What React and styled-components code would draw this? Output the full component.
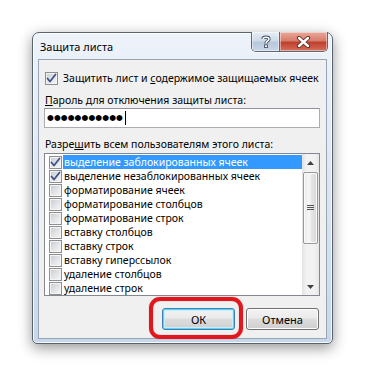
import React from 'react';
import styled, { createGlobalStyle } from 'styled-components';

const GlobalStyle = createGlobalStyle`
  body {
    margin: 0;
    background: #ffffff;
    font-family: "Noto Sans", "Segoe UI", sans-serif;
    font-size: 10.5px;
    color: #000;
  }
`;

const Page = styled.div`
  width: 366px;
  height: 378px;
  padding: 32px 0 0 32px;
  box-sizing: border-box;
`;

const Window = styled.div`
  width: 301px;
  height: 312px;
  box-sizing: border-box;
  border: 1px solid #59626f;
  border-radius: 7px 7px 5px 5px;
  background: linear-gradient(180deg, #eef3fa 0%, #e3ebf6 30%, #d3e0ef 70%, #c7d7ea 100%);
  box-shadow: 0 4px 14px rgba(0, 0, 0, 0.42), inset 0 0 0 1px rgba(255, 255, 255, 0.8);
  display: flex;
  flex-direction: column;
  padding: 0 5px 4px 5px;
`;

const TitleBar = styled.div`
  height: 26px;
  display: flex;
  align-items: flex-start;
  justify-content: space-between;
`;

const Title = styled.div`
  padding: 7px 0 0 2px;
  line-height: 14px;
  font-size: 11px;
`;

const Caption = styled.div`
  display: flex;
  margin-right: -1px;
  margin-top: -1px;
  border: 1px solid #5c6779;
  border-top: none;
  border-radius: 0 0 5px 5px;
  overflow: hidden;
  box-shadow: 0 1px 0 rgba(255, 255, 255, 0.7);
`;

const CaptionButton = styled.div`
  width: ${p => p.$w}px;
  height: 19px;
  display: flex;
  align-items: center;
  justify-content: center;
  background: ${p => p.$close
    ? 'linear-gradient(180deg, #e8aa9c 0%, #d87d6c 45%, #c0402e 55%, #d4705c 100%)'
    : 'linear-gradient(180deg, #e6edf6 0%, #cfdbe9 45%, #b7c8dc 55%, #c9d7e7 100%)'};
  border-left: ${p => p.$close ? '1px solid #5c6779' : 'none'};
  box-shadow: inset 0 0 0 1px rgba(255, 255, 255, 0.45);
`;

const Panel = styled.div`
  flex: 1;
  background: #f0f0f0;
  border: 1px solid #9aa5b3;
  display: flex;
  flex-direction: column;
  padding: 11px 6px 0 5px;
`;

const CheckRow = styled.label`
  display: flex;
  align-items: center;
  height: 14px;
  padding-left: 1px;
  gap: 5px;
  white-space: nowrap;
`;

const Box = styled.span`
  width: 13px;
  height: 13px;
  flex: none;
  box-sizing: border-box;
  border: 1px solid #8e8f8f;
  background: linear-gradient(135deg, #c6cbd2 0%, #e3e5e8 55%, #f6f6f6 100%);
  box-shadow: inset 0 0 0 1px #f4f4f4;
  display: flex;
  align-items: center;
  justify-content: center;
`;

const Label = styled.div`
  height: 14px;
  line-height: 14px;
  margin-top: ${p => p.$mt}px;
  padding-left: 1px;
  white-space: nowrap;
`;

const PasswordField = styled.div`
  margin-top: 1px;
  height: 20px;
  box-sizing: border-box;
  border: 1px solid #abadb3;
  border-top-color: #8f939c;
  background: #fff;
  display: flex;
  align-items: center;
  padding-left: 2px;
`;

const Dots = styled.span`
  font-family: "DejaVu Sans", sans-serif;
  font-size: 7.8px;
  letter-spacing: 0.1px;
  line-height: 14px;
`;

const Caret = styled.span`
  width: 1px;
  height: 14px;
  background: #000;
  margin-left: 2px;
`;

const ListBox = styled.div`
  margin-top: 2px;
  height: 143px;
  box-sizing: border-box;
  border: 1px solid #828790;
  background: #fff;
  display: flex;
`;

const Items = styled.div`
  flex: 1;
  display: flex;
  flex-direction: column;
  padding-top: 1px;
  min-width: 0;
`;

const Item = styled.div`
  height: 14px;
  display: flex;
  align-items: center;
  padding-left: 4px;
  white-space: nowrap;
`;

const ItemText = styled.span`
  flex: 1;
  margin-left: 1px;
  padding-left: 1px;
  height: 14px;
  line-height: 14px;
  background: ${p => p.$selected ? '#3399ff' : 'transparent'};
  color: ${p => p.$selected ? '#fff' : '#000'};
`;

const ScrollBar = styled.div`
  width: 17px;
  display: flex;
  flex-direction: column;
  background: linear-gradient(90deg, #e2e2e2 0%, #f2f2f2 25%, #f2f2f2 75%, #e6e6e6 100%);
`;

const Arrow = styled.div`
  height: 17px;
  display: flex;
  align-items: center;
  justify-content: center;
`;

const Track = styled.div`
  flex: 1;
  padding: 1px 1px 0 1px;
`;

const Thumb = styled.div`
  height: 72px;
  box-sizing: border-box;
  border: 1px solid #979797;
  border-radius: 2px;
  background: linear-gradient(90deg, #e9e9e9 0%, #f7f7f7 40%, #e4e4e4 60%, #d6d6d6 100%);
  box-shadow: inset 0 0 0 1px #fbfbfb;
  display: flex;
  align-items: center;
  justify-content: center;
`;

const Buttons = styled.div`
  margin-top: 12px;
  margin-right: 1px;
  display: flex;
  justify-content: flex-end;
  gap: 11px;
`;

const Highlight = styled.div`
  position: relative;
  &::after {
    content: '';
    position: absolute;
    left: -13px;
    top: -11px;
    right: -8px;
    bottom: -9px;
    border: 4px solid #e3151d;
    border-radius: 11px;
    box-shadow: 0 0 1px rgba(120, 0, 0, 0.5), inset 0 0 1px rgba(120, 0, 0, 0.5);
    pointer-events: none;
  }
`;

const Button = styled.button`
  width: 73px;
  height: 22px;
  box-sizing: border-box;
  font-family: inherit;
  font-size: 11px;
  color: #000;
  padding: 0;
  border-radius: 3px;
  border: 1px solid ${p => p.$default ? '#3c7fb1' : '#707070'};
  background: linear-gradient(180deg, #f2f2f2 0%, #ebebeb 45%, #dddddd 50%, #cfcfcf 100%);
  box-shadow: ${p => p.$default
    ? 'inset 0 0 0 1px #5fd3f5, inset 0 0 0 2px #c9eefb'
    : 'inset 0 0 0 1px #fcfcfc'};
`;

const Check = () => (
  <svg width="11" height="11" viewBox="0 0 11 11">
    <path d="M1.5 5.5 L4 8.5 L9.5 1.5" fill="none" stroke="#3f5487" strokeWidth="1.8" strokeLinecap="round" strokeLinejoin="round" />
  </svg>
);

const CheckBox = ({ checked }) => <Box>{checked && <Check />}</Box>;

const items = [
  ['выделение заблокированных ячеек', true],
  ['выделение незаблокированных ячеек', true],
  ['форматирование ячеек', false],
  ['форматирование столбцов', false],
  ['форматирование строк', false],
  ['вставку столбцов', false],
  ['вставку строк', false],
  ['вставку гиперссылок', false],
  ['удаление столбцов', false],
  ['удаление строк', false],
];

export default function App() {
  return (
    <>
      <GlobalStyle />
      <Page>
        <Window>
          <TitleBar>
            <Title>Защита листа</Title>
            <Caption>
              <CaptionButton $w={27}>
                <svg width="10" height="13" viewBox="0 0 10 13">
                  <path d="M2 4 C2 1.5 8 1.5 8 4 C8 6 5 6 5 8.5" fill="none" stroke="#3b4a5e" strokeWidth="3.2" />
                  <path d="M2 4 C2 1.5 8 1.5 8 4 C8 6 5 6 5 8.5" fill="none" stroke="#fff" strokeWidth="1.5" />
                  <rect x="3.6" y="9.8" width="2.8" height="2.8" fill="#fff" stroke="#3b4a5e" strokeWidth="0.9" />
                </svg>
              </CaptionButton>
              <CaptionButton $w={47} $close>
                <svg width="15" height="12" viewBox="0 0 15 12">
                  <path d="M3 2 L12 10 M12 2 L3 10" stroke="#5a2a25" strokeWidth="4.2" strokeLinecap="round" />
                  <path d="M3 2 L12 10 M12 2 L3 10" stroke="#fff" strokeWidth="2.4" strokeLinecap="round" />
                </svg>
              </CaptionButton>
            </Caption>
          </TitleBar>
          <Panel>
            <CheckRow>
              <CheckBox checked />
              <span>Защитить лист и <u>с</u>одержимое защищаемых ячеек</span>
            </CheckRow>
            <Label $mt={8}><u>П</u>ароль для отключения защиты листа:</Label>
            <PasswordField>
              <Dots>●●●●●●●●●●●</Dots>
              <Caret />
            </PasswordField>
            <Label $mt={9}>Разре<u>ш</u>ить всем пользователям этого листа:</Label>
            <ListBox>
              <Items>
                {items.map(([text, checked], i) => (
                  <Item key={text}>
                    <CheckBox checked={checked} />
                    <ItemText $selected={i === 0}>{text}</ItemText>
                  </Item>
                ))}
              </Items>
              <ScrollBar>
                <Arrow>
                  <svg width="7" height="4" viewBox="0 0 7 4"><path d="M0 4 L3.5 0 L7 4 Z" fill="#404040" /></svg>
                </Arrow>
                <Track>
                  <Thumb>
                    <svg width="7" height="6" viewBox="0 0 7 6">
                      <path d="M0 0.5 H7 M0 2.5 H7 M0 4.5 H7" stroke="#555" strokeWidth="1" />
                    </svg>
                  </Thumb>
                </Track>
                <Arrow>
                  <svg width="7" height="4" viewBox="0 0 7 4"><path d="M0 0 L7 0 L3.5 4 Z" fill="#404040" /></svg>
                </Arrow>
              </ScrollBar>
            </ListBox>
            <Buttons>
              <Highlight>
                <Button $default>ОК</Button>
              </Highlight>
              <Button>Отмена</Button>
            </Buttons>
          </Panel>
        </Window>
      </Page>
    </>
  );
}
